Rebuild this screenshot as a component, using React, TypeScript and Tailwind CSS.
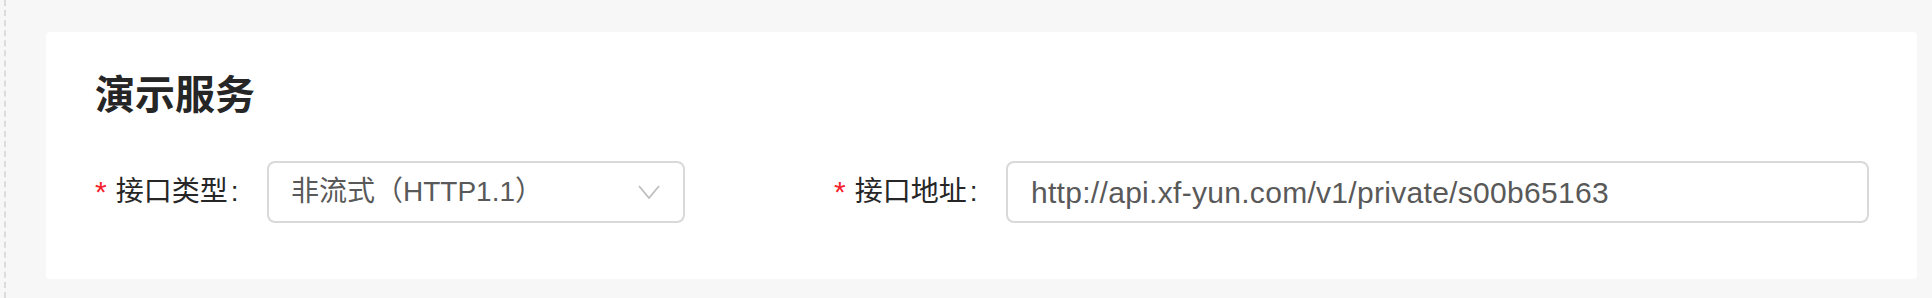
const font = '[font-family:"Liberation_Sans","Noto_Sans_CJK_SC",sans-serif]';

function Label({ text }: { text: string }) {
  return (
    <div className="w-[172px] shrink-0 flex items-center text-[28px] leading-none text-[#262626]">
      <span className="text-[#f5222d] text-[30px] mr-[9px]">*</span>
      <span>{text}</span>
      <span className="ml-[3px]">:</span>
    </div>
  );
}

export default function App() {
  return (
    <div className={`w-full h-[298px] bg-[#f7f7f7] pl-[4px] ${font}`}>
      <div className="h-full border-l-2 border-dashed border-[#dcdcdc] pl-[40px] pr-[15px] pt-[32px]">
        <div className="bg-white rounded-[4px] h-[247px] pl-[49px] pr-[48px] pt-[43px]">

          {/* Titre */}
          <h2 className="text-[40px] leading-[40px] font-bold text-[#262626]">演示服务</h2>

          {/* Formulaire */}
          <div className="flex items-center mt-[46px]">
            <div className="flex items-center">
              <Label text="接口类型" />
              <div className="w-[418px] h-[62px] border-2 border-[#d9d9d9] rounded-[8px] flex items-center justify-between pl-[22px] pr-[23px]">
                <span className="text-[28px] text-[#595959]">非流式（HTTP1.1）</span>
                <svg width="22" height="14" viewBox="0 0 22 14" fill="none">
                  <polyline points="1,1 11,13 21,1" stroke="#bfbfbf" strokeWidth="1.8" />
                </svg>
              </div>
            </div>

            <div className="flex items-center flex-1 ml-[149px]">
              <Label text="接口地址" />
              <div className="flex-1 h-[62px] border-2 border-[#d9d9d9] rounded-[8px] flex items-center pl-[23px]">
                <span className="text-[30px] tracking-[0.3px] text-[#595959]">http://api.xf-yun.com/v1/private/s00b65163</span>
              </div>
            </div>
          </div>
        </div>
      </div>
    </div>
  );
}
